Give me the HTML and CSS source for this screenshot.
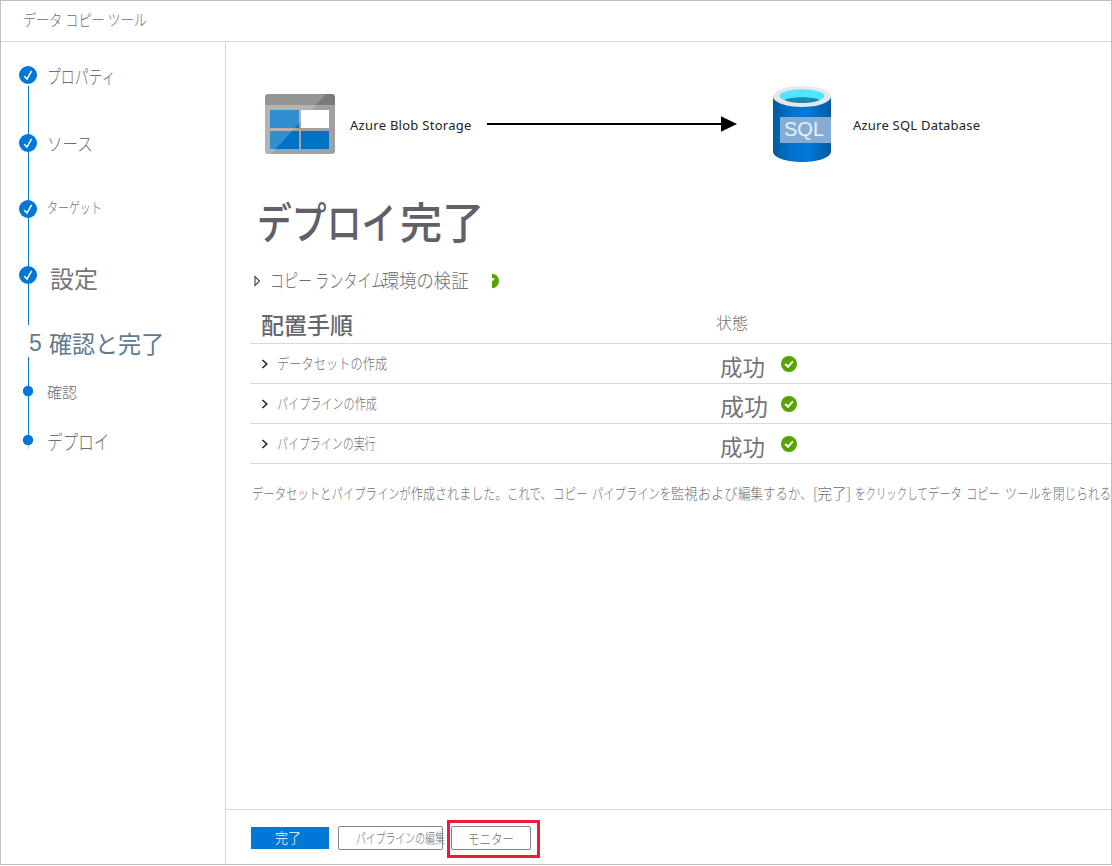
FILE: index.html
```html
<!DOCTYPE html>
<html lang="ja">
<head>
<meta charset="utf-8">
<title>データ コピー ツール</title>
<link rel="stylesheet" href="styles.css">
</head>
<body>
<div class="window">
  <header class="titlebar"><span class="t title">データ コピー ツール</span></header>
  <div class="body">
    <nav class="sidebar">
      <svg class="rail" width="20" height="420" viewBox="0 0 20 420">
        <path d="M10.5 44V283M10.5 315V398" stroke="#0078d7" fill="none"/>
        <path d="M10.5 402V407" stroke="#d0d0d0" fill="none"/>
        <g fill="#0078d7">
          <circle cx="10" cy="33" r="9"/><circle cx="10" cy="101" r="9"/><circle cx="10" cy="167" r="9"/><circle cx="10" cy="233" r="9"/>
          <circle cx="10" cy="349" r="5.2"/><circle cx="10" cy="398" r="5.2"/>
        </g>
        <g fill="none" stroke="#fff" stroke-width="1.5">
          <path d="M6.3 34.2L9 37L13.6 28.8"/><path d="M6.3 102.2L9 105L13.6 96.8"/><path d="M6.3 168.2L9 171L13.6 162.8"/><path d="M6.3 234.2L9 237L13.6 228.8"/>
        </g>
      </svg>
      <ol class="steps">
        <li class="step s1"><span class="t">プロパティ</span></li>
        <li class="step s2"><span class="t">ソース</span></li>
        <li class="step s3"><span class="t">ターゲット</span></li>
        <li class="step s4"><span class="t">設定</span></li>
        <li class="step s5"><span class="num">5</span><span class="t">確認と完了</span></li>
        <li class="step s6"><span class="t">確認</span></li>
        <li class="step s7"><span class="t">デプロイ</span></li>
      </ol>
    </nav>
    <main class="main">
      <section class="content">
        <div class="flow">
          <svg class="blob" width="70" height="60" viewBox="0 0 70 60">
            <path d="M0 10H70V57Q70 60 67 60H3Q0 60 0 57Z" fill="#a0a1a2"/>
            <path d="M3 0H67Q70 0 70 3V11H0V3Q0 0 3 0Z" fill="#7a7a7a"/>
            <path d="M5 16H34V34H5ZM5 37H34V55H5ZM36 37H64V55H36Z" fill="#0072c6"/>
            <path d="M36 16H64V34H36Z" fill="#fff"/>
            <path d="M3 0H61L6 60H3Q0 60 0 57V3Q0 0 3 0Z" fill="#fff" opacity=".2"/>
          </svg>
          <span class="svc from">Azure Blob Storage</span>
          <svg class="arrow" width="250" height="16" viewBox="0 0 250 16"><path d="M0 8H236" stroke="#000" stroke-width="2"/><path d="M234 .3L250 8L234 15.7Z"/></svg>
          <svg class="sql" width="58" height="76" viewBox="0 0 58 76">
            <defs><linearGradient id="g"><stop offset="0" stop-color="#005ba1"/><stop offset=".35" stop-color="#0074d0"/><stop offset=".6" stop-color="#0078d4"/><stop offset="1" stop-color="#005ba1"/></linearGradient></defs>
            <path d="M0 10V65.500C0 71.500 13 76 29 76S58 71.500 58 65.500V10Z" fill="url(#g)"/>
            <ellipse cx="29" cy="10.500" rx="29" ry="10.500" fill="#e8e8e8"/>
            <ellipse cx="29" cy="10" rx="22.500" ry="6.800" fill="#50e6ff"/>
            <path d="M11.500 14C18 10.300 40 10.300 46.500 14C40 18 18 18 11.500 14Z" fill="#198ab3"/>
            <path d="M7 31H58V57H7Z" fill="#83add4"/>
            <text x="11" y="50" textLength="40" class="sql-text">SQL</text>
          </svg>
          <span class="svc to">Azure SQL Database</span>
        </div>
        <h1 class="heading"><span class="t deploy">デプロイ</span><span class="t done">完了</span></h1>
        <div class="validation">
          <svg class="tri" width="7" height="12" viewBox="0 0 7 12"><path d="M1 1.500V10.500L5.500 6Z" fill="none" stroke="#394038" stroke-width="1.100"/></svg>
          <span class="t copyrt">コピー ランタイム</span><span class="t env">環境の検証</span>
          <svg class="half" width="8" height="16" viewBox="0 0 8 16"><path d="M0 .8C4 .8 7 4 7 8S4 15.200 0 15.200V8.500L2.600 6.200L1.800 4.800L0 5.500Z" fill="#57a300"/></svg>
        </div>
        <div class="table">
          <div class="row head"><span class="t steps-title">配置手順</span><span class="t state-title">状態</span></div>
          <div class="row r1"><svg class="chev" width="8" height="10" viewBox="0 0 8 10"><path d="M1.500 1L5.700 5L1.500 9"/></svg><span class="name"><span class="t">データセットの作成</span></span><span class="state">成功</span><svg class="ok" width="16" height="16" viewBox="0 0 16 16"><circle cx="8" cy="8" r="8"/><path d="M4.200 8L7 10.800L11.800 5.400"/></svg></div>
          <div class="row r2"><svg class="chev" width="8" height="10" viewBox="0 0 8 10"><path d="M1.500 1L5.700 5L1.500 9"/></svg><span class="name"><span class="t">パイプラインの作成</span></span><span class="state">成功</span><svg class="ok" width="16" height="16" viewBox="0 0 16 16"><circle cx="8" cy="8" r="8"/><path d="M4.200 8L7 10.800L11.800 5.400"/></svg></div>
          <div class="row r3"><svg class="chev" width="8" height="10" viewBox="0 0 8 10"><path d="M1.500 1L5.700 5L1.500 9"/></svg><span class="name"><span class="t">パイプラインの実行</span></span><span class="state">成功</span><svg class="ok" width="16" height="16" viewBox="0 0 16 16"><circle cx="8" cy="8" r="8"/><path d="M4.200 8L7 10.800L11.800 5.400"/></svg></div>
        </div>
        <p class="note"><span class="t n1">データセットとパイプラインが</span><span class="t n2">作成されました。</span><span class="t n3">これで、</span><span class="t n4">コピー </span><span class="t n5">パイプラインを</span><span class="t n6">監視および</span><span class="t n7">編集するか、</span><span class="t n8">[完了]</span><span class="t n9">をクリックして</span><span class="t n10">データ </span><span class="t n11">コピー </span><span class="t n12">ツールを</span><span class="t n13">閉じられる</span></p>
      </section>
      <footer class="footer">
        <button class="btn primary"><span class="t">完了</span></button>
        <button class="btn edit"><span class="t">パイプラインの編集</span></button>
        <div class="callout"><button class="btn monitor"><span class="t">モニター</span></button></div>
      </footer>
    </main>
  </div>
</div>
</body>
</html>
```

FILE: styles.css
```css
* { box-sizing: border-box; }
body { margin: 0; background: #fff; color: #706e74; font-family: "Noto Sans CJK JP", "Noto Sans", sans-serif; font-weight: 300; }
svg { display: block; flex: none; }
.window { width: 1112px; height: 865px; border: 1px solid #bfbfbf; display: flex; flex-direction: column; overflow: hidden; margin-bottom: 1px; }
.t { display: inline-block; white-space: pre; transform-origin: 0 50%; flex: none; }
.titlebar { height: 41px; flex: none; border-bottom: 1px solid #d9d9d9; display: flex; align-items: center; padding: 0 0 5px 22px; font-size: 16px; }
.title { transform: scaleX(.82); }
.body { flex: 1; display: flex; min-height: 0; }
.sidebar { width: 225px; flex: none; border-right: 1px solid #d9d9d9; display: flex; padding-left: 17px; }
.rail { flex: none; }
.steps { list-style: none; margin: 0; padding: 0; width: 180px; }
.step { display: flex; align-items: center; padding: 0 0 3px 9px; line-height: 1; }
.s1 { height: 68px; font-size: 19px; padding-bottom: 2px; } .s1 .t { transform: scaleX(.73); }
.s2 { height: 68px; font-size: 18px; padding-bottom: 2px; } .s2 .t { transform: scaleX(.86); }
.s3 { height: 59px; font-size: 15px; } .s3 .t { transform: scaleX(.73); }
.s4 { height: 85px; font-size: 24px; padding-left: 12px; padding-bottom: 4px; font-weight: 400; color: #77747d; }
.s5 { height: 45px; font-size: 24px; color: #627a90; padding: 0 0 4px; margin-left: -9px; font-weight: 400; }
.s5 .num { width: 20px; font: 400 23px/24px "Liberation Sans", sans-serif; }
.s5 .t { transform: scaleX(.96); }
.s6 { height: 52px; font-size: 15px; }
.s7 { height: 47px; font-size: 20px; padding-bottom: 2px; } .s7 .t { transform: scaleX(.78); }
.main { flex: 1; min-width: 0; display: flex; flex-direction: column; }
.content { flex: 1; padding-left: 24px; min-width: 0; overflow: hidden; }
.flow { height: 122px; padding: 44px 0 0 15px; display: flex; align-items: flex-start; }
.blob { margin-top: 8px; }
.svc { font: 400 13px/18px "Noto Sans", sans-serif; letter-spacing: .27px; color: #222; white-space: nowrap; margin-top: 30px; }
.from { width: 122px; margin-left: 15px; }
.arrow { margin: 30px 36px 0 15px; }
.to { margin-left: 22px; letter-spacing: .22px; }
.sql-text { font: 20px "Liberation Sans", sans-serif; fill: #e9f0f6; }
.heading { margin: 0; height: 98px; padding: 34px 0 0 7px; font-size: 43px; line-height: 44px; font-weight: 500; color: #616066; display: flex; }
.deploy { width: 143px; transform: scaleX(.81); }
.done { transform: scaleX(.98); }
.validation { height: 40px; display: flex; align-items: center; padding: 0 0 4px 4px; font-size: 19px; line-height: 36px; }
.copyrt { width: 112px; margin-left: 9px; transform: scaleX(.74); }
.env { width: 87px; transform: scaleX(.91); }
.tri { margin-top: 1px; }
.half { margin: 1px 0 0 23px; }
.row { height: 40px; border-bottom: 1px solid #d9d9d9; display: flex; align-items: center; }
.head { height: 42px; line-height: 24px; }
.steps-title { width: 466px; padding-left: 11px; font-size: 23px; font-weight: 500; color: #66666d; margin-top: 3px; }
.state-title { font-size: 16px; margin-top: -2px; }
.chev { margin: 0 0 0 11px; fill: none; stroke: #2c2c2c; stroke-width: 1.7; }
.name { width: 450px; padding: 0 0 2px 8px; font-size: 14.5px; line-height: 20px; }
.r1 .t { transform: scaleX(.845); }
.r2 .t { transform: scaleX(.765); }
.r3 .t { transform: scaleX(.755); }
.state { width: 61px; margin-left: 1px; font-size: 22.5px; line-height: 24px; font-weight: 400; padding-top: 4px; color: #77747d; }
.r2 .state { font-size: 24px; padding-top: 5px; }
.ok { fill: #57a300; }
.ok path { fill: none; stroke: #fff; stroke-width: 2; }
.note { margin: 18px 0 0 2px; display: flex; font-size: 14.5px; line-height: 22px; }
.n1 { width: 159px; transform: scaleX(.783); }
.n2 { width: 96px; transform: scaleX(.83); }
.n3 { width: 46px; transform: scaleX(.79); }
.n4 { width: 39px; transform: scaleX(.79); }
.n5 { width: 79px; transform: scaleX(.78); }
.n6 { width: 67px; transform: scaleX(.92); }
.n7 { width: 75px; transform: scaleX(.86); }
.n8 { width: 42px; }
.n9 { width: 73px; transform: scaleX(.72); }
.n10 { width: 38px; transform: scaleX(.78); }
.n11 { width: 39px; transform: scaleX(.78); }
.n12 { width: 48px; transform: scaleX(.82); }
.n13 { width: 59px; transform: scaleX(.8); }
.footer { height: 55px; flex: none; border-top: 1px solid #d9d9d9; display: flex; align-items: center; padding: 3px 0 0 25px; }
.btn { font: inherit; font-size: 14px; line-height: 20px; color: inherit; background: #fff; border: 1px solid #85838a; border-radius: 2px; height: 24px; padding: 0 0 2px; text-align: left; white-space: nowrap; flex: none; display: flex; align-items: center; }
.primary { width: 78px; height: 22px; margin-top: -2px; background: #0078d7; border: 0; border-radius: 0; color: #fff; padding-left: 24px; }
.primary .t { transform: scaleX(.93); }
.edit { width: 105px; margin: -2px 0 0 9px; padding-left: 17px; }
.edit .t { transform: scaleX(.705); }
.callout { margin-left: 4px; width: 93px; height: 38px; border: 3px solid #f01937; padding: 3px 0 0 1px; }
.monitor { width: 80px; padding: 0 0 0 16px; }
.monitor .t { transform: scaleX(.82); }
```
